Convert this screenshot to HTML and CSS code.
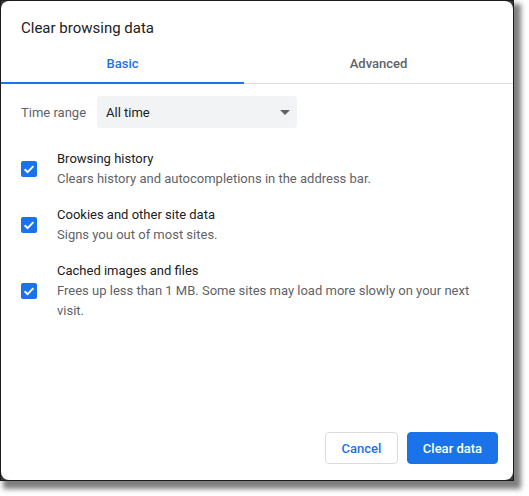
FILE: index.html
```html
<!DOCTYPE html>
<html>
<head>
<meta charset="utf-8">
<link rel="stylesheet" href="styles.css">
</head>
<body>
<div class="page">
<div class="frame">
  <div class="dialog">
    <div class="title">Clear browsing data</div>
    <div class="tabs">
      <div class="tab tab-active">Basic</div>
      <div class="tab tab-other">Advanced</div>
    </div>
    <div class="range-row">
      <span class="range-label">Time range</span>
      <div class="select">
        <span>All time</span>
        <span class="arrow"></span>
      </div>
    </div>
    <div class="items">
      <div class="item">
        <span class="checkbox"><svg viewBox="0 0 16 16" width="16" height="16"><path d="M3.6 8.2 L6.6 11.1 L12.4 5.2" fill="none" stroke="#fff" stroke-width="1.9"/></svg></span>
        <div class="item-text">
          <div class="item-title">Browsing history</div>
          <div class="item-desc">Clears history and autocompletions in the address bar.</div>
        </div>
      </div>
      <div class="item">
        <span class="checkbox"><svg viewBox="0 0 16 16" width="16" height="16"><path d="M3.6 8.2 L6.6 11.1 L12.4 5.2" fill="none" stroke="#fff" stroke-width="1.9"/></svg></span>
        <div class="item-text">
          <div class="item-title">Cookies and other site data</div>
          <div class="item-desc">Signs you out of most sites.</div>
        </div>
      </div>
      <div class="item">
        <span class="checkbox"><svg viewBox="0 0 16 16" width="16" height="16"><path d="M3.6 8.2 L6.6 11.1 L12.4 5.2" fill="none" stroke="#fff" stroke-width="1.9"/></svg></span>
        <div class="item-text">
          <div class="item-title">Cached images and files</div>
          <div class="item-desc">Frees up less than 1 MB. Some sites may load more slowly on your next visit.</div>
        </div>
      </div>
    </div>
    <div class="actions">
      <button class="btn btn-cancel">Cancel</button>
      <button class="btn btn-primary">Clear data</button>
    </div>
  </div>
</div>
</div>
</body>
</html>
```

FILE: styles.css
```css
html, body {
  margin: 0;
  padding: 0;
  background: #fff;
}
body {
  font-family: Roboto, "Liberation Sans", Arial, sans-serif;
  font-size: 13px;
  color: #202124;
}
.page {
  width: 529px;
  height: 496px;
  overflow: hidden;
}
.frame {
  width: 512px;
  height: 479px;
  border: 1px solid #1b1b1b;
  background: #3a3a3a;
  box-shadow: 5px 6px 5px 2px rgba(0, 0, 0, 0.5);
}
.dialog {
  width: 100%;
  height: 100%;
  background: #fff;
  border-radius: 8px;
  display: flex;
  flex-direction: column;
  box-sizing: border-box;
}
.title {
  font-size: 15px;
  line-height: 20px;
  padding: 17px 20px 0;
  color: #202124;
}
.tabs {
  margin-top: 6px;
  display: flex;
  border-bottom: 1px solid #dadce0;
}
.tab {
  height: 39px;
  display: flex;
  align-items: center;
  justify-content: center;
  font-weight: 500;
  font-size: 13px;
  position: relative;
}
.tab-active {
  width: 243px;
  color: #1a73e8;
}
.tab-active::after {
  content: "";
  position: absolute;
  left: 0;
  right: 0;
  bottom: -1px;
  height: 2px;
  background: #1a73e8;
}
.tab-other {
  flex: 1;
  color: #5f6368;
}
.range-row {
  display: flex;
  align-items: center;
  padding: 12px 20px 0;
}
.range-label {
  width: 76px;
  color: #5f6368;
}
.select {
  width: 200px;
  height: 32px;
  box-sizing: border-box;
  background: #f1f3f4;
  border-radius: 4px;
  display: flex;
  align-items: center;
  justify-content: space-between;
  padding: 0 7px 0 9px;
  color: #202124;
}
.arrow {
  width: 0;
  height: 0;
  border-left: 5px solid transparent;
  border-right: 5px solid transparent;
  border-top: 5px solid #5f6368;
}
.items {
  padding: 21px 20px 0;
  display: flex;
  flex-direction: column;
  gap: 16px;
}
.item {
  display: flex;
  align-items: center;
  gap: 20px;
}
.checkbox {
  width: 16px;
  height: 16px;
  flex: none;
  background: #1a73e8;
  border-radius: 2px;
  display: flex;
}
.item-text {
  line-height: 20px;
}
.item-title {
  color: #202124;
}
.item-desc {
  color: #5f6368;
}
.actions {
  margin-top: auto;
  display: flex;
  justify-content: flex-end;
  gap: 9px;
  padding: 0 15px 16px;
}
.btn {
  height: 32px;
  box-sizing: border-box;
  border-radius: 4px;
  font-family: Roboto, "Liberation Sans", Arial, sans-serif;
  font-size: 13px;
  font-weight: 500;
  padding: 0;
  white-space: nowrap;
  cursor: pointer;
}
.btn-cancel {
  background: #fff;
  border: 1px solid #dadce0;
  color: #1a73e8;
  width: 73px;
}
.btn-primary {
  background: #1a73e8;
  border: 1px solid #1a73e8;
  color: #fff;
  width: 91px;
}
```
